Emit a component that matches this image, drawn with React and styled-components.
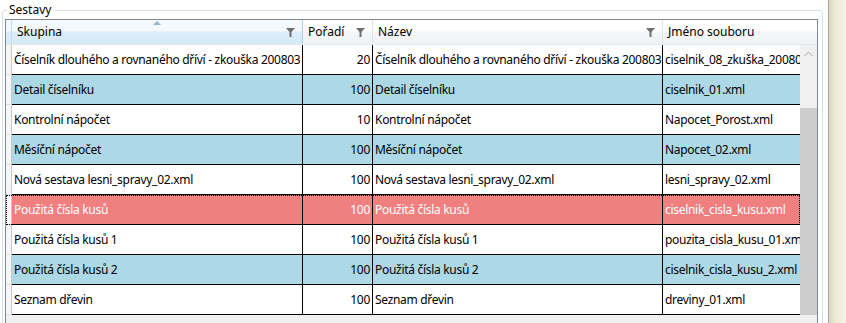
import React from "react";
import styled, { createGlobalStyle } from "styled-components";

const GlobalStyle = createGlobalStyle`
    html, body {
        margin: 0;
        padding: 0;
        background: #fff;
        overflow: hidden;
    }
    body {
        font-family: "Noto Sans", "Open Sans", sans-serif;
        font-size: 12px;
        letter-spacing: -0.3px;
        color: #000;
    }
`;

const columns = [
    { key: "group", title: "Skupina", width: 291, filter: true, sorted: true },
    { key: "order", title: "Pořadí", width: 70, filter: true, align: "right" },
    { key: "name", title: "Název", width: 290, filter: true },
    { key: "file", title: "Jméno souboru", width: 170 },
];

const rows = [
    { group: "Číselník dlouhého a rovnaného dříví - zkouška 200803", order: 20, file: "ciselnik_08_zkuška_20080301.xml", tone: "plain" },
    { group: "Detail číselníku", order: 100, file: "ciselnik_01.xml", tone: "blue" },
    { group: "Kontrolní nápočet", order: 10, file: "Napocet_Porost.xml", tone: "plain" },
    { group: "Měsíční nápočet", order: 100, file: "Napocet_02.xml", tone: "blue" },
    { group: "Nová sestava lesni_spravy_02.xml", order: 100, file: "lesni_spravy_02.xml", tone: "plain" },
    { group: "Použitá čísla kusů", order: 100, file: "ciselnik_cisla_kusu.xml", tone: "red", focused: true },
    { group: "Použitá čísla kusů 1", order: 100, file: "pouzita_cisla_kusu_01.xml", tone: "plain" },
    { group: "Použitá čísla kusů 2", order: 100, file: "ciselnik_cisla_kusu_2.xml", tone: "blue" },
    { group: "Seznam dřevin", order: 100, file: "dreviny_01.xml", tone: "plain" },
];

const toneColors = {
    plain: { bg: "#ffffff", fg: "#000000" },
    blue: { bg: "#add8e6", fg: "#000000" },
    red: { bg: "#f08080", fg: "#ffffff" },
};

const template = `6px ${columns.map((c) => c.width + "px").join(" ")}`;

const FilterIcon = () => (
    <svg width="9" height="9" viewBox="0 0 9 9">
        <path d="M0 0 H9 L5.5 4 V9 H3.5 V4 Z" fill="#6f6f6f" />
    </svg>
);

const App = () => {
    return (
        <>
            <GlobalStyle />
            <StyledPage>
                <StyledMain>
                    <StyledGroup>
                        <legend>Sestavy</legend>
                        <StyledGrid>
                            <StyledHeaderRow>
                                <StyledHeaderCorner />
                                {columns.map((c) => (
                                    <StyledHeaderCell key={c.key} $sorted={c.sorted}>
                                        {c.sorted && <StyledSortArrow />}
                                        <span>{c.title}</span>
                                        {c.filter && <FilterIcon />}
                                    </StyledHeaderCell>
                                ))}
                            </StyledHeaderRow>
                            <StyledBody>
                                <StyledViewport>
                                    {rows.map((r, i) => (
                                        <StyledRow key={i} $tone={r.tone} $focused={r.focused}>
                                            <StyledRowHeader />
                                            <StyledCell>{r.group}</StyledCell>
                                            <StyledCell $align="right">{r.order}</StyledCell>
                                            <StyledCell>{r.group}</StyledCell>
                                            <StyledCell>{r.file}</StyledCell>
                                        </StyledRow>
                                    ))}
                                </StyledViewport>
                                <StyledVScroll>
                                    <StyledScrollButton>
                                        <svg width="9" height="6" viewBox="0 0 9 6">
                                            <path d="M0.5 5 L4.5 1 L8.5 5" fill="none" stroke="#a6a6a6" strokeWidth="1" />
                                        </svg>
                                    </StyledScrollButton>
                                    <StyledThumb $offset={46} />
                                </StyledVScroll>
                            </StyledBody>
                            <StyledHScroll />
                        </StyledGrid>
                    </StyledGroup>
                </StyledMain>
                <StyledSide />
            </StyledPage>
        </>
    );
};

// Style components

const StyledPage = styled.div`
    display: flex;
    width: 846px;
    height: 323px;
    overflow: hidden;
`;

const StyledMain = styled.div`
    width: 828px;
    flex: none;
`;

const StyledSide = styled.div`
    flex: 1;
    border-left: 1px solid #a9a9a0;
    background: linear-gradient(to right, #d9d5bf, #ece8d2 30%, #f6f4e6);
`;

const StyledGroup = styled.fieldset`
    margin: 2px 0 0 2px;
    width: 821px;
    min-width: 0;
    box-sizing: border-box;
    border: 1px solid #d5dfe5;
    border-radius: 3px;
    padding: 1px 4px 0 2px;
    legend {
        padding: 0 2px;
        margin-left: 2px;
        line-height: 16px;
        font-size: 12px;
        letter-spacing: 0;
    }
`;

const StyledGrid = styled.div`
    display: flex;
    flex-direction: column;
    border: 1px solid #828790;
    height: 330px;
    background: #fff;
    overflow: hidden;
`;

const StyledHeaderRow = styled.div`
    display: grid;
    grid-template-columns: ${template} 1fr;
    height: 25px;
    overflow: hidden;
    background: linear-gradient(#ffffff 45%, #f5f6f7 50%, #f1f2f4);
    border-bottom: 1px solid #e3e8ec;
    box-sizing: border-box;
    letter-spacing: 0;
`;

const StyledHeaderCorner = styled.div`
    background: linear-gradient(#f3f9fd 45%, #dcedf8 50%, #d5eaf7);
    border-right: 1px solid #c5dcec;
`;

const StyledHeaderCell = styled.div`
    position: relative;
    display: flex;
    align-items: center;
    justify-content: space-between;
    padding: 0 7px 1px 5px;
    border-right: 1px solid ${(p) => (p.$sorted ? "#a9d2ee" : "#e2e3ea")};
    background: ${(p) =>
        p.$sorted ? "linear-gradient(#f3f9fd 45%, #dcedf8 50%, #d5eaf7)" : "transparent"};
    white-space: nowrap;
    svg {
        flex: none;
        margin-top: 1px;
    }
`;

const StyledSortArrow = styled.div`
    position: absolute;
    top: 1px;
    left: 141px;
    width: 0;
    height: 0;
    border-left: 4px solid transparent;
    border-right: 4px solid transparent;
    border-bottom: 4px solid #98b5cc;
`;

const StyledBody = styled.div`
    display: flex;
    height: 270px;
    flex: none;
`;

const StyledViewport = styled.div`
    flex: 1;
    min-width: 0;
    overflow: hidden;
`;

const StyledRow = styled.div`
    display: grid;
    grid-template-columns: ${template};
    height: 30px;
    background: ${(p) => toneColors[p.$tone].bg};
    color: ${(p) => toneColors[p.$tone].fg};
    outline: ${(p) => (p.$focused ? "1px dotted #000" : "none")};
    outline-offset: -1px;
`;

const StyledRowHeader = styled.div`
    background: #f7f7f7;
    border-bottom: 1px solid #e0e0e0;
    border-right: 1px solid #c8c8c8;
`;

const StyledCell = styled.div`
    display: flex;
    align-items: center;
    justify-content: ${(p) => (p.$align === "right" ? "flex-end" : "flex-start")};
    padding: 0 2px 0 2px;
    border-right: 1px solid #000;
    border-bottom: 1px solid #000;
    white-space: nowrap;
    overflow: hidden;
`;

const StyledVScroll = styled.div`
    width: 17px;
    flex: none;
    display: flex;
    flex-direction: column;
    background: #f0f0f0;
`;

const StyledScrollButton = styled.div`
    height: 17px;
    display: flex;
    align-items: center;
    justify-content: center;
`;

const StyledThumb = styled.div`
    margin-top: ${(p) => p.$offset}px;
    flex: 1;
    background: #cdcdcd;
`;

const StyledHScroll = styled.div`
    height: 17px;
    flex: none;
    background: #f0f0f0;
`;

export default App;
